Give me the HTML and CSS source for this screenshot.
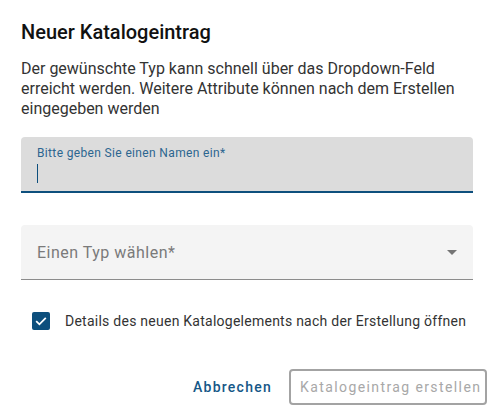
FILE: index.html
```html
<!DOCTYPE html>
<html lang="de">
<head>
    <meta charset="UTF-8">
    <meta name="viewport" content="width=device-width, initial-scale=1.0">
    <title>Neuer Katalogeintrag</title>
    <link rel="stylesheet" href="styles.css">
</head>
<body>
    <div class="dialog">
        <h2 class="dialog-title">Neuer Katalogeintrag</h2>

        <p class="dialog-intro">Der gewünschte Typ kann schnell über das Dropdown-Feld erreicht werden. Weitere Attribute können nach dem Erstellen eingegeben werden</p>

        <div class="field field-focused">
            <label class="field-label">Bitte geben Sie einen Namen ein*</label>
            <span class="field-cursor"></span>
        </div>

        <div class="field-select">
            <span class="select-placeholder">Einen Typ wählen*</span>
            <svg class="select-arrow" width="10" height="5" viewBox="0 0 10 5">
                <path d="M0 0 L5 5 L10 0 Z" fill="#757575"/>
            </svg>
        </div>

        <div class="check-row">
            <span class="checkbox">
                <svg width="18" height="18" viewBox="0 0 18 18">
                    <path d="M4.2 9.2 L7.4 12.3 L13.8 5.8" fill="none" stroke="#fff" stroke-width="1.8"/>
                </svg>
            </span>
            <span class="check-label">Details des neuen Katalogelements nach der Erstellung öffnen</span>
        </div>

        <div class="dialog-actions">
            <button class="btn-text">Abbrechen</button>
            <button class="btn-outlined" disabled>Katalogeintrag erstellen</button>
        </div>
    </div>
</body>
</html>
```

FILE: styles.css
```css
body {
    margin: 0;
    font-family: Roboto, "Liberation Sans", sans-serif;
    background-color: #ffffff;
    color: #212121;
}
.dialog {
    padding: 16px 21px 6px 21px;
}
.dialog-title {
    margin: 0 0 11px;
    font-size: 20px;
    line-height: 32px;
    font-weight: 500;
    color: #111;
}
.dialog-intro {
    margin: 0;
    font-size: 16px;
    line-height: 20px;
    color: #333;
}
.field {
    margin-top: 18px;
    height: 56px;
    box-sizing: border-box;
    padding: 8px 16px 0;
    background-color: #dcdcdc;
    border-radius: 4px 4px 0 0;
    border-bottom: 2px solid #0d4f7d;
    display: flex;
    flex-direction: column;
    align-items: flex-start;
}
.field-label {
    font-size: 12px;
    line-height: 16px;
    letter-spacing: 0.35px;
    color: #2c6690;
}
.field-cursor {
    display: block;
    width: 1px;
    height: 19px;
    margin-top: 3px;
    background-color: #0d4f7d;
}
.field-select {
    margin-top: 32px;
    height: 55px;
    box-sizing: border-box;
    padding: 0 16px;
    background-color: #f4f4f4;
    border-radius: 4px 4px 0 0;
    border-bottom: 1px solid #8c8c8c;
    display: flex;
    align-items: center;
    justify-content: space-between;
}
.select-placeholder {
    font-size: 16px;
    letter-spacing: 0.5px;
    color: #7a7a7a;
}
.check-row {
    margin-top: 32px;
    padding-left: 11px;
    display: flex;
    align-items: center;
    gap: 15px;
    height: 18px;
}
.checkbox {
    width: 18px;
    height: 18px;
    border-radius: 2px;
    background-color: #0d4f7d;
    display: flex;
}
.check-label {
    font-size: 14px;
    letter-spacing: 0.25px;
    color: #333;
    white-space: nowrap;
}
.dialog-actions {
    margin-top: 39px;
    margin-right: -14px;
    display: flex;
    justify-content: flex-end;
    gap: 9px;
}
button {
    font-family: Roboto, "Liberation Sans", sans-serif;
    font-size: 14px;
    font-weight: 500;
    letter-spacing: 1.25px;
    height: 36px;
    border-radius: 4px;
    background: none;
    cursor: pointer;
}
.btn-text {
    border: none;
    padding: 0 8px;
    color: #155787;
}
.btn-outlined {
    width: 198px;
    border: 2px solid #a3a3a3;
    padding: 0 9px;
    text-align: left;
    white-space: nowrap;
    color: #a8a8a8;
    font-weight: 400;
    letter-spacing: 1.4px;
    cursor: default;
}
```
